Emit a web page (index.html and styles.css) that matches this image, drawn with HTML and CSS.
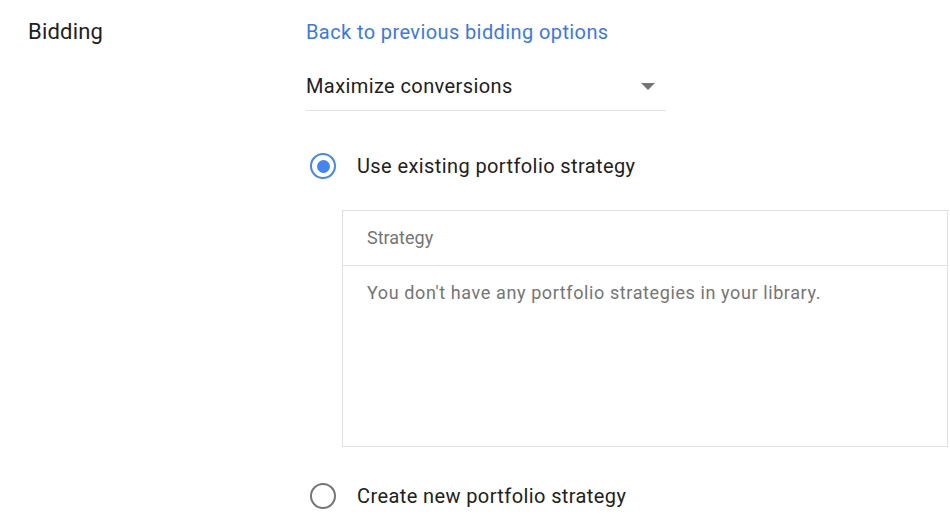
FILE: index.html
```html
<!DOCTYPE html>
<html>
<head>
<meta charset="utf-8">
<link rel="stylesheet" href="styles.css">
</head>
<body>
<div class="section">
  <div class="label">Bidding</div>
  <div class="content">
    <a class="link" href="#">Back to previous bidding options</a>
    <div class="dropdown">
      <span class="dd-text">Maximize conversions</span>
      <span class="dd-arrow"></span>
    </div>
    <div class="radio-row">
      <span class="radio checked"></span>
      <span class="radio-label">Use existing portfolio strategy</span>
    </div>
    <div class="strategy-box">
      <div class="box-header">Strategy</div>
      <div class="box-body">You don't have any portfolio strategies in your library.</div>
    </div>
    <div class="radio-row second">
      <span class="radio"></span>
      <span class="radio-label">Create new portfolio strategy</span>
    </div>
  </div>
</div>
</body>
</html>
```

FILE: styles.css
```css
html, body {
  margin: 0;
  padding: 0;
  background: #ffffff;
}
body {
  font-family: Roboto, "Liberation Sans", Arial, sans-serif;
  color: #212121;
  font-size: 20px;
  line-height: 24px;
  letter-spacing: 0.4px;
}
.section {
  display: flex;
  padding-top: 20px;
}
.label {
  width: 278px;
  padding-left: 28px;
  flex: none;
  font-size: 22px;
  line-height: 24px;
  letter-spacing: 0.2px;
}
.content {
  flex: 1;
  display: flex;
  flex-direction: column;
  align-items: flex-start;
}
.link {
  color: #3b78e7;
  text-decoration: none;
}
.dropdown {
  margin-top: 30px;
  width: 360px;
  display: flex;
  align-items: center;
  justify-content: space-between;
  padding-bottom: 12px;
  border-bottom: 1px solid #e0e0e0;
}
.dd-arrow {
  width: 0;
  height: 0;
  border-left: 7.5px solid transparent;
  border-right: 7.5px solid transparent;
  border-top: 7px solid #757575;
  margin-right: 11px;
}
.radio-row {
  display: flex;
  align-items: center;
  margin-top: 42px;
}
.radio {
  box-sizing: border-box;
  width: 26px;
  height: 26px;
  border-radius: 50%;
  border: 2.5px solid #757575;
  margin-left: 4px;
  margin-right: 21px;
  display: flex;
  align-items: center;
  justify-content: center;
  flex: none;
}
.radio.checked {
  border-color: #4285f4;
}
.radio.checked::after {
  content: "";
  width: 13px;
  height: 13px;
  border-radius: 50%;
  background: #4285f4;
}
.strategy-box {
  margin-top: 31px;
  margin-left: 36px;
  width: 606px;
  box-sizing: border-box;
  border: 1px solid #e0e0e0;
  color: #757575;
  font-size: 18px;
  line-height: 22px;
  letter-spacing: 0;
}
.box-header {
  padding: 16px 24px;
  border-bottom: 1px solid #e0e0e0;
}
.box-body {
  padding: 16px 24px;
  height: 148px;
  letter-spacing: 0.6px;
}
.radio-row.second {
  margin-top: 36px;
}
```
